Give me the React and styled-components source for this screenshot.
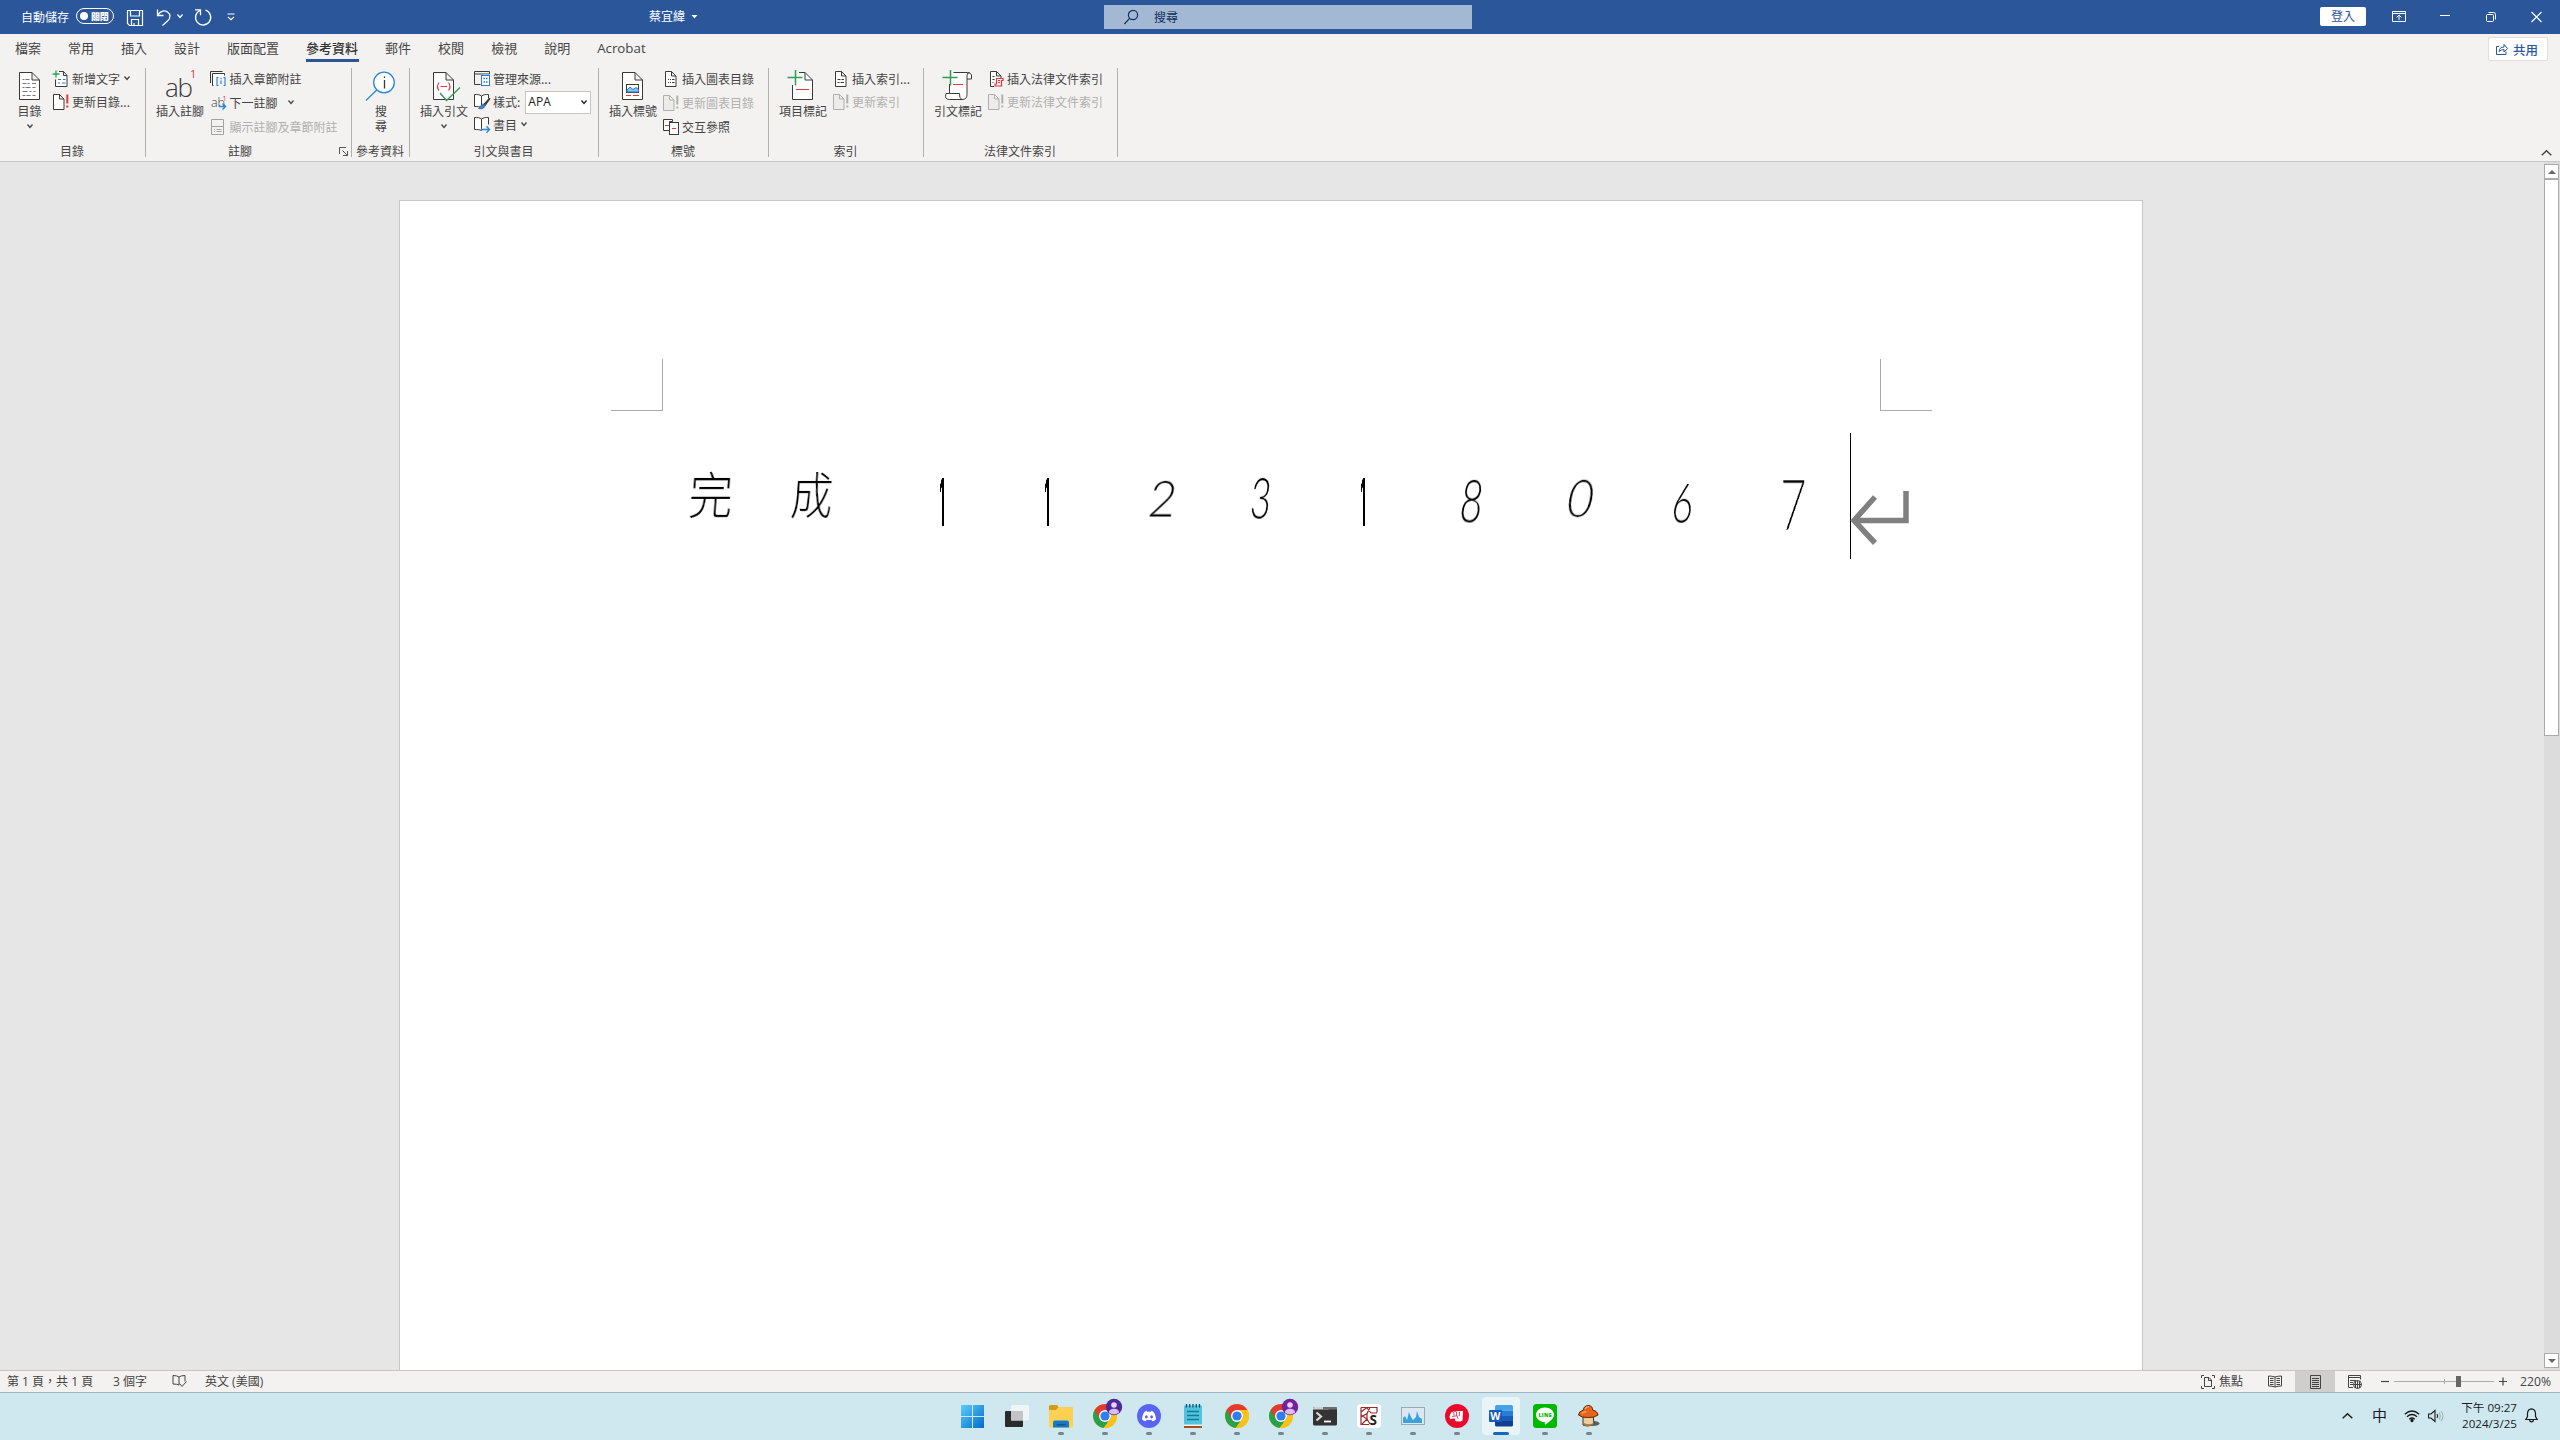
import React from "react";
import styled, { createGlobalStyle, css } from "styled-components";

const ui = `"Noto Sans CJK TC", "Open Sans", sans-serif`;
const mix = `"Open Sans", "Noto Sans CJK TC", sans-serif`;

const Global = createGlobalStyle`
  * { box-sizing: border-box; }
  body { margin: 0; background: #e6e6e6; overflow: hidden; }
  svg { display: block; flex: none; overflow: visible; }
`;

const Screen = styled.div`
  width: 2560px;
  height: 1440px;
  display: flex;
  flex-direction: column;
  font: 12px/15px ${ui};
  color: #444;
  white-space: nowrap;
`;

/* ---------- title bar ---------- */
const TitleBar = styled.header`
  height: 34px;
  background: #2b579a;
  color: #fff;
  display: flex;
  align-items: center;
  flex: none;
  padding-bottom: 1px;
`;
const QuickAccess = styled.div`
  width: 649px;
  display: flex;
  align-items: center;
  padding: 0 0 1px 21px;
`;
const Toggle = styled.div`
  width: 38px;
  height: 16px;
  margin: 0 13px 0 7px;
  border: 1px solid #fff;
  border-radius: 8px;
  display: flex;
  align-items: center;
  gap: 3px;
  padding-left: 3px;
  font-size: 9px;
  font-weight: 900;
  letter-spacing: -0.3px;
  &::before {
    content: "";
    width: 8px;
    height: 8px;
    border-radius: 50%;
    background: #fff;
  }
`;
const DocTitle = styled.div`
  width: 455px;
  display: flex;
  align-items: center;
  gap: 6px;
  padding-bottom: 3px;
`;
const Search = styled.div`
  width: 368px;
  height: 24px;
  background: #a3b8d3;
  color: #10305f;
  display: flex;
  align-items: center;
  padding-left: 20px;
  gap: 16px;
  margin-top: 1px;
  & > span { margin-top: -2px; }
`;
const WindowTools = styled.div`
  margin-left: auto;
  display: flex;
  align-items: center;
  padding-right: 18px;
`;
const SignIn = styled.div`
  width: 46px;
  height: 19px;
  line-height: 18px;
  margin-right: 26px;
  border-radius: 2px;
  background: #fff;
  color: #2b579a;
  text-align: center;
`;

/* ---------- ribbon ---------- */
const Ribbon = styled.section`
  height: 128px;
  flex: none;
  background: #f3f2f1;
  border-bottom: 1px solid #c8c8c8;
`;
const Tabs = styled.nav`
  height: 30px;
  display: flex;
  padding-left: 1.5px;
  font-size: 13px;
`;
const Tab = styled.div`
  padding: 0 13.5px;
  line-height: 27px;
  ${(p) => p.$latin && css`font: 13.3px/29px ${mix};`}
  ${(p) =>
    p.$active &&
    css`
      font-weight: 500;
      color: #333;
      background: linear-gradient(#2b579a, #2b579a) 13px 25px / 53px 3px no-repeat;
    `}
`;
const Share = styled.div`
  margin: 3px 12px 0 auto;
  width: 60px;
  height: 24px;
  border: 1px solid #e1dfdd;
  border-radius: 2px;
  background: #fff;
  color: #2b579a;
  font-weight: 500;
  display: flex;
  align-items: center;
  padding-left: 7px;
  gap: 5px;
  font-size: 12.5px;
`;
const Tools = styled.div`
  height: 97px;
  display: flex;
`;
const Group = styled.div`
  width: ${(p) => p.$w}px;
  height: 89px;
  margin-top: 4px;
  border-right: 1px solid #b3b0ad;
  display: flex;
  flex-direction: column;
  justify-content: space-between;
`;
const Body = styled.div`
  display: flex;
  height: 74px;
  padding-left: ${(p) => p.$pad ?? 11}px;
  gap: ${(p) => p.$gap ?? 6.5}px;
`;
const GroupLabel = styled.div`
  display: flex;
  justify-content: center;
  margin-bottom: -1px;
  padding-right: ${(p) => (p.$launcher ? 0 : 1)}px;
  & > span { margin-left: ${(p) => (p.$launcher ? "auto" : 0)}; }
  & > svg { margin: 4px 3px 0 87px; }
`;
const Big = styled.div`
  width: 46px;
  display: flex;
  flex-direction: column;
  align-items: center;
  & > span { margin-top: 1px; }
  & > span + span { margin-top: 0; }
`;
const ChevronSlot = styled.div`
  padding-top: 6px;
`;
const Stack = styled.div`
  display: flex;
  flex-direction: column;
  margin-top: ${(p) => (p.$tight ? -0.5 : -1)}px;
`;
const Row = styled.div`
  height: ${(p) => (p.$tight ? 23 : 24)}px;
  display: flex;
  align-items: center;
  color: ${(p) => (p.$off ? "#b1afad" : "#444")};
  & > svg:first-child { margin: 0 0.5px 0 -1px; }
  & > span { margin-top: -2px; }
`;
const RowChevron = styled.div`
  padding: 0 0 2px ${(p) => p.$gap ?? 4}px;
`;
const Combo = styled.div`
  width: 66px;
  height: 23px;
  margin-left: 5px;
  border: 1px solid #c6c6c6;
  background: #fff;
  color: #222;
  display: flex;
  align-items: center;
  justify-content: space-between;
  padding: 0 3px 0 2px;
  font: 12px/20px ${mix};
`;
const Collapse = styled.div`
  margin-left: auto;
  align-self: flex-end;
  padding: 0 8px 5px 0;
`;

/* ---------- document ---------- */
const Workspace = styled.main`
  flex: 1;
  display: flex;
  background: #e6e6e6;
  min-height: 0;
`;
const Canvas = styled.div`
  flex: 1;
  padding: 38px 0 0 399px;
  display: flex;
`;
const Page = styled.article`
  width: 1744px;
  background: #fff;
  border: 1px solid #c6c6c6;
  border-bottom: 0;
  padding: 158px 210px 0 211px;
`;
const Margins = styled.div`
  display: flex;
  justify-content: space-between;
`;
const Corner = styled.div`
  width: 52px;
  height: 52px;
  border-bottom: 1px solid #ababab;
  ${(p) => (p.$right ? "border-left" : "border-right")}: 1px solid #ababab;
`;
const Line = styled.div`
  display: flex;
  align-items: center;
  height: 126px;
  margin: 22px 0 0 51px;
  color: #000;
`;
const Glyph = styled.span`
  flex: none;
  width: ${(p) => p.$w}px;
  margin-left: ${(p) => p.$gap}px;
  display: flex;
  justify-content: center;
  font: ${(p) => p.$wt ?? 300} ${(p) => p.$fs}px/60px ${(p) => p.$f ?? "Lato"}, "Noto Sans CJK TC", sans-serif;
  transform: translateY(${(p) => p.$dy ?? 0}px) skewX(${(p) => p.$skew ?? 0}deg) scaleX(${(p) => p.$sx ?? 1});
  will-change: transform;
  -webkit-text-stroke: ${(p) => p.$thin ?? 0}px #fff;
`;
const Caret = styled.i`
  flex: none;
  width: 1px;
  height: 126px;
  margin-left: 44px;
  background: #000;
`;

const ScrollBar = styled.div`
  width: 16px;
  display: flex;
  flex-direction: column;
  padding: 2px 1px 2px 0;
  background: #dcdcdc;
`;
const ScrollButton = styled.div`
  height: 15px;
  border: 1px solid #ababab;
  background: #fff;
  display: grid;
  place-items: center;
`;
const Thumb = styled.div`
  height: 557px;
  border: 1px solid #ababab;
  background: #fff;
  margin-bottom: auto;
`;

/* ---------- status bar ---------- */
const StatusBar = styled.footer`
  height: 23px;
  flex: none;
  background: #f3f2f1;
  border-top: 1px solid #c6c6c6;
  border-bottom: 1px solid #9fb3c0;
  display: flex;
  align-items: center;
  padding-left: 7px;
  font-size: 12px;
`;
const StatusItem = styled.div`
  width: ${(p) => p.$w}px;
  font-family: ${mix};
  margin-top: -1px;
`;
const StatusRight = styled.div`
  margin-left: auto;
  height: 100%;
  display: flex;
  align-items: center;
`;
const ViewButton = styled.div`
  width: 40px;
  height: 100%;
  display: grid;
  place-items: center;
  background: ${(p) => (p.$on ? "#d0cecc" : "transparent")};
`;
const FocusButton = styled.div`
  display: flex;
  align-items: center;
  gap: 4px;
  margin-right: 12px;
  & > span { margin-top: -2px; }
`;
const Slider = styled.div`
  width: 100px;
  height: 11px;
  margin: 0 5px;
  display: flex;
  align-items: center;
  background: linear-gradient(#ababab, #ababab) 0 5px / 100% 1px no-repeat,
    linear-gradient(#ababab, #ababab) 50px 3px / 1px 5px no-repeat;
  &::before {
    content: "";
    margin-left: 62px;
    width: 5px;
    height: 11px;
    background: #666;
  }
`;
const Percent = styled.div`
  width: 53px;
  padding-left: 13px;
  font: 12.2px/15px ${mix};
`;

/* ---------- taskbar ---------- */
const Taskbar = styled.footer`
  height: 47px;
  flex: none;
  background: #cfe7ee;
  display: grid;
  grid-template-columns: 951px 1fr 240px;
  color: #1b1b1b;
`;
const Apps = styled.div`
  grid-column: 2;
  display: flex;
`;
const AppSlot = styled.div`
  width: 44px;
  height: 47px;
  display: flex;
  flex-direction: column;
  align-items: center;
  padding-top: 4px;
`;
const AppTile = styled.div`
  width: 38px;
  height: 38px;
  border-radius: 4px;
  background: ${(p) => (p.$active ? "#e9f4f9" : "transparent")};
  display: flex;
  flex-direction: column;
  align-items: center;
  justify-content: space-between;
  padding-top: 7px;
`;
const Dot = styled.i`
  width: ${(p) => (p.$active ? 16 : 6)}px;
  height: 3px;
  border-radius: 2px;
  background: ${(p) => (p.$none ? "transparent" : p.$active ? "#0f6cbd" : "#77858b")};
`;
const Tray = styled.div`
  display: flex;
  align-items: center;
  padding: 0 0 2px 22px;
`;
const Ime = styled.div`
  width: 16px;
  margin: 0 16px 2px 19px;
  font-size: 15px;
  line-height: 20px;
`;
const Clock = styled.div`
  width: 73px;
  text-align: right;
  font: 11.6px/16px ${mix};
  margin-right: 8px;
`;

/* ---------- drawings ---------- */
const Svg = ({ w = 20, h = 20, s = "currentColor", sw = 1, children, ...r }) => (
  <svg width={w} height={h} viewBox={`0 0 ${w} ${h}`} fill="none" stroke={s} strokeWidth={sw} {...r}>
    {children}
  </svg>
);
const Chevron = ({ w = 7 }) => (
  <Svg w={w} h={4} sw={1.3}>
    <path d={`M.5 .5 ${w / 2} 3.4 ${w - 0.5} .5`} />
  </Svg>
);
const Bang = ({ c = "#e03a3e", x = 16.8 }) => <path d={`M${x} 2.5v9M${x} 13.5v2`} stroke={c} strokeWidth="2" />;
const INK = "#3b3a39";

const SmallIcon = {
  addText: (
    <Svg s={INK}>
      <path d="M6 2.5h6l3 4.5v10.5h-9.500v-9" fill="#fff" stroke="none" />
      <path d="M7 2.500h4.500l3.500 4v11h-11.500v-7M11.500 2.500v4h3.500" />
      <path d="M6 10.500h3m2 0h2.500M6 14h2m2 0h3.500" stroke="#2b7cd3" />
      <path d="M4 1.500v7M.5 5h7" stroke="#2f9e55" strokeWidth="1.300" />
    </Svg>
  ),
  update: (off) => (
    <Svg s={off ? "#b1afad" : INK}>
      <path d="M1.500 2.500h6l4.500 4.500v10.500h-10.500zM7.500 2.500v4.500h4.500" fill={off ? "#ececec" : "#fff"} />
      <Bang c={off ? "#b1afad" : "#e03a3e"} x={15.3} />
    </Svg>
  ),
  endnote: (
    <Svg s={INK}>
      <path d="M1.500 14v-11.500h12M4.500 16.500h-1v-12h12v2" />
      <path d="M4 5h11v3h-6v8h-5z" fill="#fff" stroke="none" />
      <path d="M9.500 8.500h-1.500v8h1.500M14.500 8.500h1.500v8h-1.500M12 11.500v3.500M12 9v1.200" stroke="#2b88d8" strokeWidth="1.200" />
    </Svg>
  ),
  next: (
    <Svg>
      <text x="2" y="14" fontSize="12.500" fill={INK} stroke="none" fontFamily="Open Sans, sans-serif" fontWeight="300">ab</text>
      <text x="13.500" y="7.500" fontSize="7" fill="#e03a3e" stroke="none" fontFamily="Open Sans, sans-serif">1</text>
      <path d="M10 13.500h6M13.500 10.500l3 3-3 3" stroke="#2b88d8" strokeWidth="1.500" />
    </Svg>
  ),
  showNotes: (
    <Svg s="#a5a3a1">
      <path d="M2.500 2.500h12v15h-12zM2.500 9.500h12M5 12.500h1m1.500 0h5M5 14.500h1m1.500 0h5" />
    </Svg>
  ),
  source: (
    <Svg s={INK}>
      <path d="M16.500 5v-2.500h-15v13h6M1.500 5h15" />
      <path d="M10 5h6v2h-6z" fill="#8cc0ee" stroke="none" />
      <rect x="8.500" y="6.500" width="8" height="10" fill="#fff" stroke="#2b7cd3" />
      <path d="M10.500 9.500h1.500m1 0h1.500M10.500 13h1.500m1 0h1.500" stroke="#2b7cd3" strokeWidth="1.600" />
    </Svg>
  ),
  style: (
    <Svg s={INK}>
      <path d="M8.500 15.500c-2-1-4-1-7-1v-12c3 0 5 0 7 1.500 2-1.500 4-1.500 7-1.500v4M8.500 4v11.500" fill="#fff" />
      <path d="M16.500 6l-6 6.500 1.500 1.300 5-7z" fill="#3b3a39" />
      <path d="M11 12c-2.500-.5-3 2-5.500 4.500 3 1 6.500 0 6.500-3.500z" fill="#3f7fcf" stroke="#2b579a" strokeWidth=".6" />
    </Svg>
  ),
  biblio: (
    <Svg s={INK}>
      <path d="M8.500 15.500c-2-1-4-1-7-1v-12c3 0 5 0 7 1.500 2-1.500 4-1.500 7-1.500v7M8.500 4v11.500" fill="#fff" />
      <path d="M8 14.500h8.500M13.500 11.300l3 3.200-3 3.200" stroke="#2b88d8" strokeWidth="1.300" />
    </Svg>
  ),
  figures: (
    <Svg s={INK}>
      <path d="M3.500 2.500h6l4.500 4.500v10.500h-10.500zM9.500 2.500v4.500h4.500" fill="#fff" />
      <path d="M6 10.500h1m1 0h1m1 0h2.500M6 13.500h1m1 0h1m1 0h2.500" />
    </Svg>
  ),
  crossref: (
    <Svg s={INK}>
      <path d="M1.500 2.500h9v2h-3v9h-6z" fill="#fff" />
      <rect x="7.500" y="5.500" width="9" height="12" fill="#fff" />
      <path d="M3 8.500h4M10 11.500h4" stroke="#e03a3e" strokeWidth="1.200" />
    </Svg>
  ),
  index: (
    <Svg s={INK}>
      <path d="M3.500 2.500h6l4.500 4.500v10.500h-10.500zM9.500 2.500v4.500h4.500" fill="#fff" />
      <path d="M5.500 10.500h3m1 0h2.500M5.500 13.500h2m1 0h3.500" />
    </Svg>
  ),
  authorities: (
    <Svg s={INK}>
      <path d="M7 17.500h-3.500v-15h6l4.500 4.500v2M9.500 2.500v4.500h4.500M5.500 7.500h2M5.500 10.500h2M5.500 13.500h1" fill="#fff" />
      <path d="M9.500 9.500h6.500v2h-1.500v5.500h-6.500v-2h1.500zM11 11.500h2M11 13.500h2" stroke="#e03a3e" strokeWidth="1.200" />
    </Svg>
  ),
};

const Sheet = ({ x = 12.5 }) => (
  <path d={`M${x} 4.500h12.500l7.500 7.500v19.500h-20zM${x + 12.5} 4.500v7.500h7.500`} fill="#fff" />
);
const BigIcon = {
  toc: (
    <Svg w={46} h={34} s={INK}>
      <Sheet />
      <path d="M15.500 11.500h2m1 0h4M15.500 15.500h4m1 0h2M25 15.500h4M15.500 19.500h2m1 0h5m2 0h3M15.500 23.500h5m2 0h2m2 0h2M15.500 27.500h3m1 0h4m2 0h3" stroke="#777" />
    </Svg>
  ),
  footnote: (
    <Svg w={46} h={34}>
      <text x="8" y="28.500" fontSize="26" textLength="28" fill={INK} stroke="none" fontFamily="Open Sans, sans-serif" fontWeight="300">ab</text>
      <text x="33" y="10" fontSize="11" fill="#e03a3e" stroke="none" fontFamily="Open Sans, sans-serif">1</text>
    </Svg>
  ),
  lookup: (
    <Svg w={46} h={34} s="#2b88d8">
      <circle cx="26" cy="14.500" r="10.300" fill="#fff" strokeWidth="1.300" />
      <path d="M18.700 22 8 32.500" strokeWidth="1.300" />
      <path d="M26.500 12v8.500M26.500 8.500v1.500" stroke={INK} strokeWidth="1.300" />
    </Svg>
  ),
  citation: (
    <Svg w={46} h={34} s={INK}>
      <Sheet />
      <path d="M18 14.500q-3 4 0 8M27.500 14.500q3 4 0 8M19.500 18.500h6.500" stroke="#e03a3e" strokeWidth="1.200" />
      <path d="M19 25l6.500 7.500 13.500-13" stroke="#2f9e55" strokeWidth="1.400" />
    </Svg>
  ),
  caption: (
    <Svg w={46} h={34} s={INK}>
      <Sheet />
      <rect x="16.500" y="16.500" width="12" height="8" fill="#fff" />
      <path d="M17 22l3-3 3 2.500 3-2 2.500 2v2.500h-11.500z" fill="#8cc0ee" stroke="#2b7cd3" />
      <path d="M16 27.500h5m2 0h6" stroke="#e03a3e" />
    </Svg>
  ),
  markEntry: (
    <Svg w={46} h={34} s={INK}>
      <path d="M12.500 17v14.500h20v-19.500l-7.500-7.500h-6M25 4.500v7.500h7.500" fill="#fff" />
      <path d="M15.500 2v15.500M7.500 9.500h15" stroke="#2f9e55" strokeWidth="1.500" />
      <path d="M16 21.500h13" stroke="#e03a3e" />
    </Svg>
  ),
  markCitation: (
    <Svg w={46} h={34} s={INK}>
      <path d="M14.500 16v9.500h-3.500q-2 6 3.500 6h12.500q5 0 5-5v-15.500h4.500v-4q-1-2.500-4-2.500h-14M27 31.500q-3-1-2.500-6h-10M32 11v-3.500q0-3 2.500-3" fill="#fff" />
      <path d="M15.500 2v15.500M7.500 9.500h15" stroke="#2f9e55" strokeWidth="1.500" />
      <path d="M18 16.500h10" stroke="#e03a3e" />
    </Svg>
  ),
};

const Person = ({ c, x = 13, y = -5 }) => (
  <g transform={`translate(${x} ${y})`} stroke="none">
    <circle cx="8" cy="8" r="8.200" fill={c} />
    <circle cx="8" cy="6" r="2.800" fill="#e6d3f5" />
    <path d="M3 13.500c0-5 10-5 10 0q-5 4-10 0z" fill="#d9bdf0" />
  </g>
);
const Chrome = ({ badge }) => (
  <Svg w={24} h={24} stroke="none">
    <circle cx="12" cy="12" r="12" fill="#fbc116" />
    <path d="M12 12 1.600 6A12 12 0 0 0 10.500 23.900L17.200 15z" fill="#2aa148" />
    <path d="M12 12v-6h10.400A12 12 0 0 0 1.600 6l5.200 9z" fill="#e33b2e" />
    <path d="M17.200 15 11 24A12 12 0 0 0 22.400 6H12z" fill="#fbc116" />
    <circle cx="12" cy="12" r="6" fill="#fff" />
    <circle cx="12" cy="12" r="4.600" fill="#2f7ef0" />
    {badge && <Person c={badge} />}
  </Svg>
);

const apps = [
  { id: "start", none: true, icon: (
    <Svg w={24} h={24} stroke="none">
      <defs><linearGradient id="win" gradientUnits="userSpaceOnUse" x1="0" y1="0" x2="24" y2="24"><stop stopColor="#5fd0fb" /><stop offset="1" stopColor="#0067c8" /></linearGradient></defs>
      <path d="M0 1h11v11h-11zM12 1h11v11h-11zM0 13h11v11h-11zM12 13h11v11h-11z" fill="url(#win)" />
    </Svg>) },
  { id: "tasks", none: true, icon: (
    <Svg w={24} h={24} stroke="none">
      <rect x="0" y="7" width="18" height="16" rx="1" fill="#2b2b2b" />
      <rect x="6" y="1" width="18" height="15.500" rx="1" fill="#f4f6f7" opacity=".85" />
      <rect x="6" y="7" width="12" height="9.500" fill="#c2c4c5" />
    </Svg>) },
  { id: "files", icon: (
    <Svg w={24} h={24} stroke="none">
      <path d="M0 2.500q0-1.500 1.500-1.500h6.500l2 2.500v4h-10z" fill="#d69a12" />
      <path d="M0 6h7l2.500-3h13.500q1 0 1 1v18q0 1.500-1.500 1.500h-21q-1.500 0-1.500-1.500z" fill="#fcd053" />
      <path d="M4 23.500v-5q0-2 2-2h12q2 0 2 2v5z" fill="#1878c8" /><path d="M7.500 20h9v1.500h-9z" fill="#0d559c" />
    </Svg>) },
  { id: "chrome1", icon: <Chrome badge="#4e2a98" /> },
  { id: "discord", icon: (
    <Svg w={24} h={24} stroke="none">
      <circle cx="12" cy="12" r="12" fill="#5865f2" />
      <path d="M8 7.500l1.500-.7.600 1h3.800l.600-1 1.500.7q2.500 2 3 8-1.800 1.700-3.800 1.700l-.8-1.400q-2.400.6-4.800 0l-.8 1.400q-2 0-3.800-1.700.5-6 3-8z" fill="#fff" />
      <ellipse cx="9.400" cy="12.800" rx="1.400" ry="1.600" fill="#5865f2" /><ellipse cx="14.600" cy="12.800" rx="1.400" ry="1.600" fill="#5865f2" />
    </Svg>) },
  { id: "notepad", icon: (
    <Svg w={24} h={24} stroke="none">
      <rect x="3" y="1.500" width="18" height="20" rx="1" fill="#52c3dd" />
      <path d="M3 20.500h18v2h-18z" fill="#f2f2f2" /><path d="M3 22h18v2h-18z" fill="#a3501a" />
      <path d="M5.500 0v3.500M8.700 0v3.500M12 0v3.500M15.300 0v3.500M18.500 0v3.500" stroke="#0b4f72" strokeWidth="1.300" />
      <path d="M6 7.500h12M6 11.500h12M6 15.500h12" stroke="#137a9b" strokeWidth="1.400" />
    </Svg>) },
  { id: "chrome2", icon: <Chrome /> },
  { id: "chrome3", icon: <Chrome badge="#76209c" /> },
  { id: "terminal", icon: (
    <Svg w={24} h={24} stroke="none">
      <rect y="3" width="24" height="18.500" rx="1.500" fill="#333" />
      <path d="M0 5.500v-1q0-1.500 1.500-1.500h14v2.500z" fill="#cfcfcf" /><path d="M10 3h6v2.500h-6zM16 3h6.500q1.500 0 1.500 1.500v1h-8z" fill="#6e6e6e" />
      <path d="M3.500 8.500l4.500 4-4.500 4" stroke="#d8d8d8" strokeWidth="2.200" /><path d="M11 17.500h7" stroke="#fff" strokeWidth="1.800" />
    </Svg>) },
  { id: "sketch", icon: (
    <Svg w={24} h={24} stroke="none">
      <rect width="24" height="24" rx="4" fill="#fff" />
      <path d="M4 3.500h16v5M4 3.500v17h8M4 8l6-4.500M4 13l6-3.500 3-6M10 4l4 5h6M5 20l5-5-6-4M10 9.500v5.500l3 5" stroke="#9c2a31" strokeWidth="1.200" />
      <text x="12.500" y="20.500" fontFamily="Open Sans, sans-serif" fontSize="13.500" fontWeight="700" fill="#222">S</text>
    </Svg>) },
  { id: "monitor", icon: (
    <Svg w={24} h={24} stroke="none">
      <rect x=".5" y="3.500" width="23" height="17" fill="#dbe8f2" stroke="#9aa9b5" />
      <path d="M2 19v-5l2-2 2 4 2-8 2 5 2 3 3-3 1-6 2 6 3 2v4z" fill="#3ba3dc" />
    </Svg>) },
  { id: "fist", icon: (
    <Svg w={24} h={24} stroke="none">
      <circle cx="12" cy="12" r="12" fill="#ea0a2c" />
      <path d="M6 8.500l2.500-1 2 .2 2-.7 2 .3 3.500-.3-.5 9.500-2 1-5-.3-1-3-4.500 1-.5-3z" fill="#fff" />
      <path d="M8.700 8l.3 3.500M11.500 8l.2 3.500M14.500 8l-.2 4M7 12.500l5-.8 1 3" stroke="#ea0a2c" strokeWidth=".8" />
    </Svg>) },
  { id: "word", active: true, icon: (
    <Svg w={24} h={24} stroke="none">
      <path d="M6 2.500q0-1.500 1.500-1.500h15q1.500 0 1.500 1.500v4h-18z" fill="#41a5ee" /><path d="M6 6.500h18v5.500h-18z" fill="#2b7cd3" />
      <path d="M6 12h18v5h-18z" fill="#185abd" /><path d="M6 17h18v4q0 1.500-1.500 1.500h-15q-1.500 0-1.500-1.500z" fill="#103f91" />
      <rect y="6" width="13" height="12" rx="1" fill="#185abd" />
      <text x="1.200" y="15.700" fontFamily="Open Sans, sans-serif" fontSize="10.500" fontWeight="700" fill="#fff">W</text>
    </Svg>) },
  { id: "line", icon: (
    <Svg w={24} h={24} stroke="none">
      <rect width="24" height="24" rx="3.500" fill="#00b900" />
      <path d="M12 3.500c5 0 9 3.200 9 7.200 0 3.600-4.500 7-8.500 9.800-.8.400-.8-.6-.7-2.400-5-.2-8.800-3.400-8.800-7.400s4-7.200 9-7.200z" fill="#fff" />
      <text x="5.400" y="12.800" fontFamily="Open Sans, sans-serif" fontSize="5.400" fontWeight="800" textLength="13.200" fill="#00b900">LINE</text>
    </Svg>) },
  { id: "mushroom", icon: (
    <Svg w={24} h={24} stroke="none">
      <ellipse cx="16" cy="19.500" rx="6.500" ry="2.500" fill="#3f4a4c" opacity=".85" />
      <path d="M6 11h10l1 8.500q-5 4-11 1.500z" fill="#e9cfa0" stroke="#4a2c12" />
      <path d="M7 19q5 2.500 9.500 0v1.500q-5 3-9.500 .8z" fill="#a8793f" />
      <path d="M1.500 11q0-3.500 5-5 0-4.500 5.500-4.500 4 1 3.500 4.500 5 1 5.500 5-4 3-9.500 2.500-7 .5-10-2.500z" fill="#e8641a" stroke="#5e2408" />
      <path d="M8 5q1-2.500 4-2.300M4.500 9.500q2-2 5-1.500" stroke="#ffb06a" strokeWidth="1.200" />
    </Svg>) },
];

/* each handwritten character sits in a cell; skew and squeeze imitate the pen */
const glyphs = [
  { t: "完", $gap: 27, $w: 44, $fs: 50, $skew: -4, $sx: 0.88, $dy: -1, $thin: 0.2 },
  { t: "成", $gap: 57, $w: 44, $fs: 50, $skew: -4, $sx: 0.84, $dy: -1, $thin: 0.2 },
  { t: "1", $gap: 95, $w: 26, $fs: 66, $f: "Inter", $sx: 0.18, $dy: 6, $wt: 600 },
  { t: "1", $gap: 79, $w: 26, $fs: 66, $f: "Inter", $sx: 0.18, $dy: 6, $wt: 600 },
  { t: "2", $gap: 90, $w: 26, $fs: 51, $skew: -8, $sx: 0.92, $dy: 2, $thin: 0.1 },
  { t: "3", $gap: 72, $w: 26, $fs: 57, $skew: -5, $sx: 0.62, $dy: 1, $thin: 0.1 },
  { t: "1", $gap: 76, $w: 26, $fs: 66, $f: "Inter", $sx: 0.18, $dy: 6, $wt: 600 },
  { t: "8", $gap: 83, $w: 26, $fs: 60, $skew: -7, $sx: 0.64, $dy: 4, $thin: 0.1 },
  { t: "0", $gap: 83, $w: 26, $fs: 52, $skew: -10, $sx: 0.86, $dy: 1, $thin: 0.1 },
  { t: "6", $gap: 76, $w: 26, $fs: 55, $skew: -5, $sx: 0.66, $dy: 6, $thin: 0.1 },
  { t: "7", $gap: 84, $w: 26, $fs: 71, $skew: -1, $sx: 0.64, $dy: 7, $thin: 0.7 },
];

const Item = ({ icon, children, tight, off, chev, chevGap }) => (
  <Row $tight={tight} $off={off}>
    {icon}
    <span>{children}</span>
    {chev && <RowChevron $gap={chevGap}><Chevron w={6} /></RowChevron>}
  </Row>
);

export default function App() {
  return (
    <Screen>
      <Global />
      <TitleBar>
        <QuickAccess>
          <span>自動儲存</span>
          <Toggle>關閉</Toggle>
          <Svg w={16} h={16} sw={1.2} style={{ marginTop: 3 }}>
            <path d="M.5 .5h15v15h-13l-2-2zM3.500 .5v5.500h9v-5.500M4.500 15.500v-6h7v6M7 13v2.500" />
          </Svg>
          <Svg w={16} h={17} sw={1.3} style={{ margin: "3px 0 0 13px" }}>
            <path d="M1.500 .5v6h6M1.500 6.500c3-5 7-5.500 10-3.500s3.500 6 0 9l-5 4.500" />
          </Svg>
          <span style={{ margin: "0 11px 0 5px" }}><Chevron w={6} /></span>
          <Svg w={17} h={17} sw={1.3} style={{ marginTop: 3 }}>
            <path d="M1 .8h5.500v5.500M6 1.500a7.600 7.600 0 1 0 5.500-.3" />
          </Svg>
          <Svg w={8} h={8} sw={1.2} style={{ margin: "2px 0 0 16px" }}>
            <path d="M.5 1h7M1 4l3 2.800 3-2.800" />
          </Svg>
        </QuickAccess>
        <DocTitle>
          <span>蔡宜緯</span>
          <Svg w={7} h={4} stroke="none" style={{ marginTop: 3 }}><path d="M.5 0h6l-3 3.500z" fill="#fff" /></Svg>
        </DocTitle>
        <Search>
          <Svg w={14} h={15} sw={1.2}>
            <circle cx="9" cy="5" r="4.600" /><path d="M5.600 8.400 .4 14" />
          </Svg>
          <span>搜尋</span>
        </Search>
        <WindowTools>
          <SignIn>登入</SignIn>
          <Svg w={14} h={11}><path d="M.5 .5h13v10h-13zM.5 2.500h13M7 9v-5M4.700 6.300 7 4l2.300 2.300" /></Svg>
          <Svg w={10} h={11} style={{ marginLeft: 34 }}><path d="M0 4.500h10" /></Svg>
          <Svg w={10} h={10} style={{ marginLeft: 36 }}>
            <rect x=".5" y="2.500" width="7" height="7" rx="1" /><path d="M2.500 .5h5q2 0 2 2v5" />
          </Svg>
          <Svg w={11} h={10} style={{ marginLeft: 35 }} sw={1.1}><path d="M.5 0l10 10M10.500 0l-10 10" /></Svg>
        </WindowTools>
      </TitleBar>

      <Ribbon>
        <Tabs>
          {["檔案", "常用", "插入", "設計", "版面配置", "參考資料", "郵件", "校閱", "檢視", "說明", "Acrobat"].map((t) => (
            <Tab key={t} $active={t === "參考資料"} $latin={t === "Acrobat"}>{t}</Tab>
          ))}
          <Share>
            <Svg w={12} h={12}>
              <path d="M3 3.500h-2.500v8h9.500v-3M3 8.500q.5-4.500 5-4.500v-2.500l3.500 4-3.500 3.500v-2.500q-3 0-5 2z" />
            </Svg>
            共用
          </Share>
        </Tabs>
        <Tools>
          <Group $w={146}>
            <Body $pad={6.5} $gap={0}>
              <Big>{BigIcon.toc}<span>目錄</span><ChevronSlot><Chevron w={6} /></ChevronSlot></Big>
              <Stack $tight>
                <Item tight icon={SmallIcon.addText} chev>新增文字</Item>
                <Item tight icon={SmallIcon.update()}>更新目錄...</Item>
              </Stack>
            </Body>
            <GroupLabel><span>目錄</span></GroupLabel>
          </Group>
          <Group $w={206}>
            <Body $gap={7}>
              <Big>{BigIcon.footnote}<span>插入註腳</span></Big>
              <Stack>
                <Item icon={SmallIcon.endnote}>插入章節附註</Item>
                <Item icon={SmallIcon.next} chev chevGap={10}>下一註腳</Item>
                <Item off icon={SmallIcon.showNotes}>顯示註腳及章節附註</Item>
              </Stack>
            </Body>
            <GroupLabel $launcher>
              <span>註腳</span>
              <Svg w={9} h={9} s="#555"><path d="M.5 7v-6.500h6.500M3.500 3.500l5 5M8.500 4v4.500h-4.500" /></Svg>
            </GroupLabel>
          </Group>
          <Group $w={58}>
            <Body $pad={6}>
              <Big>{BigIcon.lookup}<span>搜</span><span>尋</span></Big>
            </Body>
            <GroupLabel><span>參考資料</span></GroupLabel>
          </Group>
          <Group $w={189}>
            <Body>
              <Big>{BigIcon.citation}<span>插入引文</span><ChevronSlot><Chevron w={6} /></ChevronSlot></Big>
              <Stack $tight>
                <Item tight icon={SmallIcon.source}>管理來源...</Item>
                <Row $tight>
                  {SmallIcon.style}
                  <span>樣式:</span>
                  <Combo>APA<Chevron w={6} /></Combo>
                </Row>
                <Item tight icon={SmallIcon.biblio} chev>書目</Item>
              </Stack>
            </Body>
            <GroupLabel><span>引文與書目</span></GroupLabel>
          </Group>
          <Group $w={170}>
            <Body>
              <Big>{BigIcon.caption}<span>插入標號</span></Big>
              <Stack>
                <Item icon={SmallIcon.figures}>插入圖表目錄</Item>
                <Item off icon={SmallIcon.update(true)}>更新圖表目錄</Item>
                <Item icon={SmallIcon.crossref}>交互參照</Item>
              </Stack>
            </Body>
            <GroupLabel><span>標號</span></GroupLabel>
          </Group>
          <Group $w={155}>
            <Body>
              <Big>{BigIcon.markEntry}<span>項目標記</span></Big>
              <Stack $tight>
                <Item tight icon={SmallIcon.index}>插入索引...</Item>
                <Item tight off icon={SmallIcon.update(true)}>更新索引</Item>
              </Stack>
            </Body>
            <GroupLabel><span>索引</span></GroupLabel>
          </Group>
          <Group $w={194}>
            <Body>
              <Big>{BigIcon.markCitation}<span>引文標記</span></Big>
              <Stack $tight>
                <Item tight icon={SmallIcon.authorities}>插入法律文件索引</Item>
                <Item tight off icon={SmallIcon.update(true)}>更新法律文件索引</Item>
              </Stack>
            </Body>
            <GroupLabel><span>法律文件索引</span></GroupLabel>
          </Group>
          <Collapse>
            <Svg w={11} h={6} sw={1.4}><path d="M.7 5.300 5.500 .8l4.800 4.500" /></Svg>
          </Collapse>
        </Tools>
      </Ribbon>

      <Workspace>
        <Canvas>
          <Page>
            <Margins><Corner /><Corner $right /></Margins>
            <Line>
              {glyphs.map(({ t, ...g }, i) => (
                <Glyph key={i} {...g}>{t}</Glyph>
              ))}
              <Caret />
              <Svg w={60} h={54} s="#808080" sw={5.5} style={{ margin: "44px 0 0 -1px" }}>
                <path d="M56 0v29.500H4M25 6 4 29.500 25 52" />
              </Svg>
            </Line>
          </Page>
        </Canvas>
        <ScrollBar>
          <ScrollButton><Svg w={8} h={4} stroke="none"><path d="M0 4h8l-4-4z" fill="#666" /></Svg></ScrollButton>
          <Thumb />
          <ScrollButton><Svg w={8} h={4} stroke="none"><path d="M0 0h8l-4 4z" fill="#666" /></Svg></ScrollButton>
        </ScrollBar>
      </Workspace>

      <StatusBar>
        <StatusItem $w={106}>第 1 頁，共 1 頁</StatusItem>
        <StatusItem $w={59}>3 個字</StatusItem>
        <StatusItem $w={33}>
          <Svg w={15} h={14}>
            <path d="M7 11q-2-1-6-1v-8.500q4 0 6 1.500 2-1.500 6-1.500v6M7 3v8M7.500 9.500l2.500 3 4.500-5" />
          </Svg>
        </StatusItem>
        <StatusItem>英文 (美國)</StatusItem>
        <StatusRight>
          <FocusButton>
            <Svg w={14} h={14}>
              <path d="M3 .5h-2.500v2.500M11 .5h2.500v2.500M3 13.500h-2.500v-2.500M11 13.500h2.500v-2.500M3.500 2.500h4.500l2.500 2.500v6.500h-7zM7.500 2.500v3h3" />
            </Svg>
            <span>焦點</span>
          </FocusButton>
          <ViewButton>
            <Svg w={14} h={13}><path d="M7 12q-3-1-6.500-1v-10q3.500 0 6.500 1 3-1 6.500-1v10q-3.500 0-6.500 1zM7 2v10M2 3.500h3.500M2 5.500h3.500M2 7.500h3.500M2 9.500h3.500M8.500 3.500h3.500M8.500 5.500h3.500M8.500 7.500h3.500M8.500 9.500h3.500" /></Svg>
          </ViewButton>
          <ViewButton $on>
            <Svg w={11} h={14}><path d="M.5 .5h10v13h-10zM2 3.500h7M2 5.500h7M2 7.500h7M2 9.500h7M2 11.500h7" /></Svg>
          </ViewButton>
          <ViewButton>
            <Svg w={14} h={14}>
              <path d="M5 12.500h-4.500v-12h12v4M.5 2.500h12M2 5.500h6M2 7.500h3M2 9.500h3" />
              <circle cx="9.500" cy="9.500" r="4" fill="#f3f2f1" /><path d="M5.500 9.500h8M9.500 5.500v8M7.500 6v7M11.500 6v7" />
            </Svg>
          </ViewButton>
          <Svg w={8} h={9} sw={1.2} style={{ marginLeft: 6 }}><path d="M0 4.500h8" /></Svg>
          <Slider />
          <Svg w={8} h={9} sw={1.2}><path d="M0 4.500h8M4 .5v8" /></Svg>
          <Percent>220%</Percent>
        </StatusRight>
      </StatusBar>

      <Taskbar>
        <Apps>
          {apps.map((a) => (
            <AppSlot key={a.id}>
              <AppTile $active={a.active}>
                {a.icon}
                <Dot $active={a.active} $none={a.none} />
              </AppTile>
            </AppSlot>
          ))}
        </Apps>
        <Tray>
          <Svg w={11} h={6} sw={1.5}><path d="M.7 5.300 5.500 .8l4.800 4.500" /></Svg>
          <Ime>中</Ime>
          <Svg w={16} h={12} sw={1.3}>
            <path d="M.8 4.200q7.200-6.500 14.400 0M3 6.800q5-4.500 10 0M5.300 9.200q2.700-2.400 5.400 0" />
            <circle cx="8" cy="10.500" r="1" fill="currentColor" />
          </Svg>
          <Svg w={16} h={12} sw={1.1} style={{ marginLeft: 8 }}>
            <path d="M.6 4h2.400l4-3.500v11l-4-3.500h-2.400z" /><path d="M9 4q1.500 2 0 4" />
            <path d="M11 2.500q2.500 3.500 0 7M13 1q4 5 0 10" stroke="#9db3ba" />
          </Svg>
          <Clock>下午 09:27<br />2024/3/25</Clock>
          <Svg w={13} h={15} sw={1.200}>
            <path d="M.8 11.500 2.500 8.500v-3.500q.5-4 4-4.200 3.500.2 4 4.200v3.500l1.700 3zM4.500 11.800q.3 2 2 2t2-2" />
          </Svg>
        </Tray>
      </Taskbar>
    </Screen>
  );
}
